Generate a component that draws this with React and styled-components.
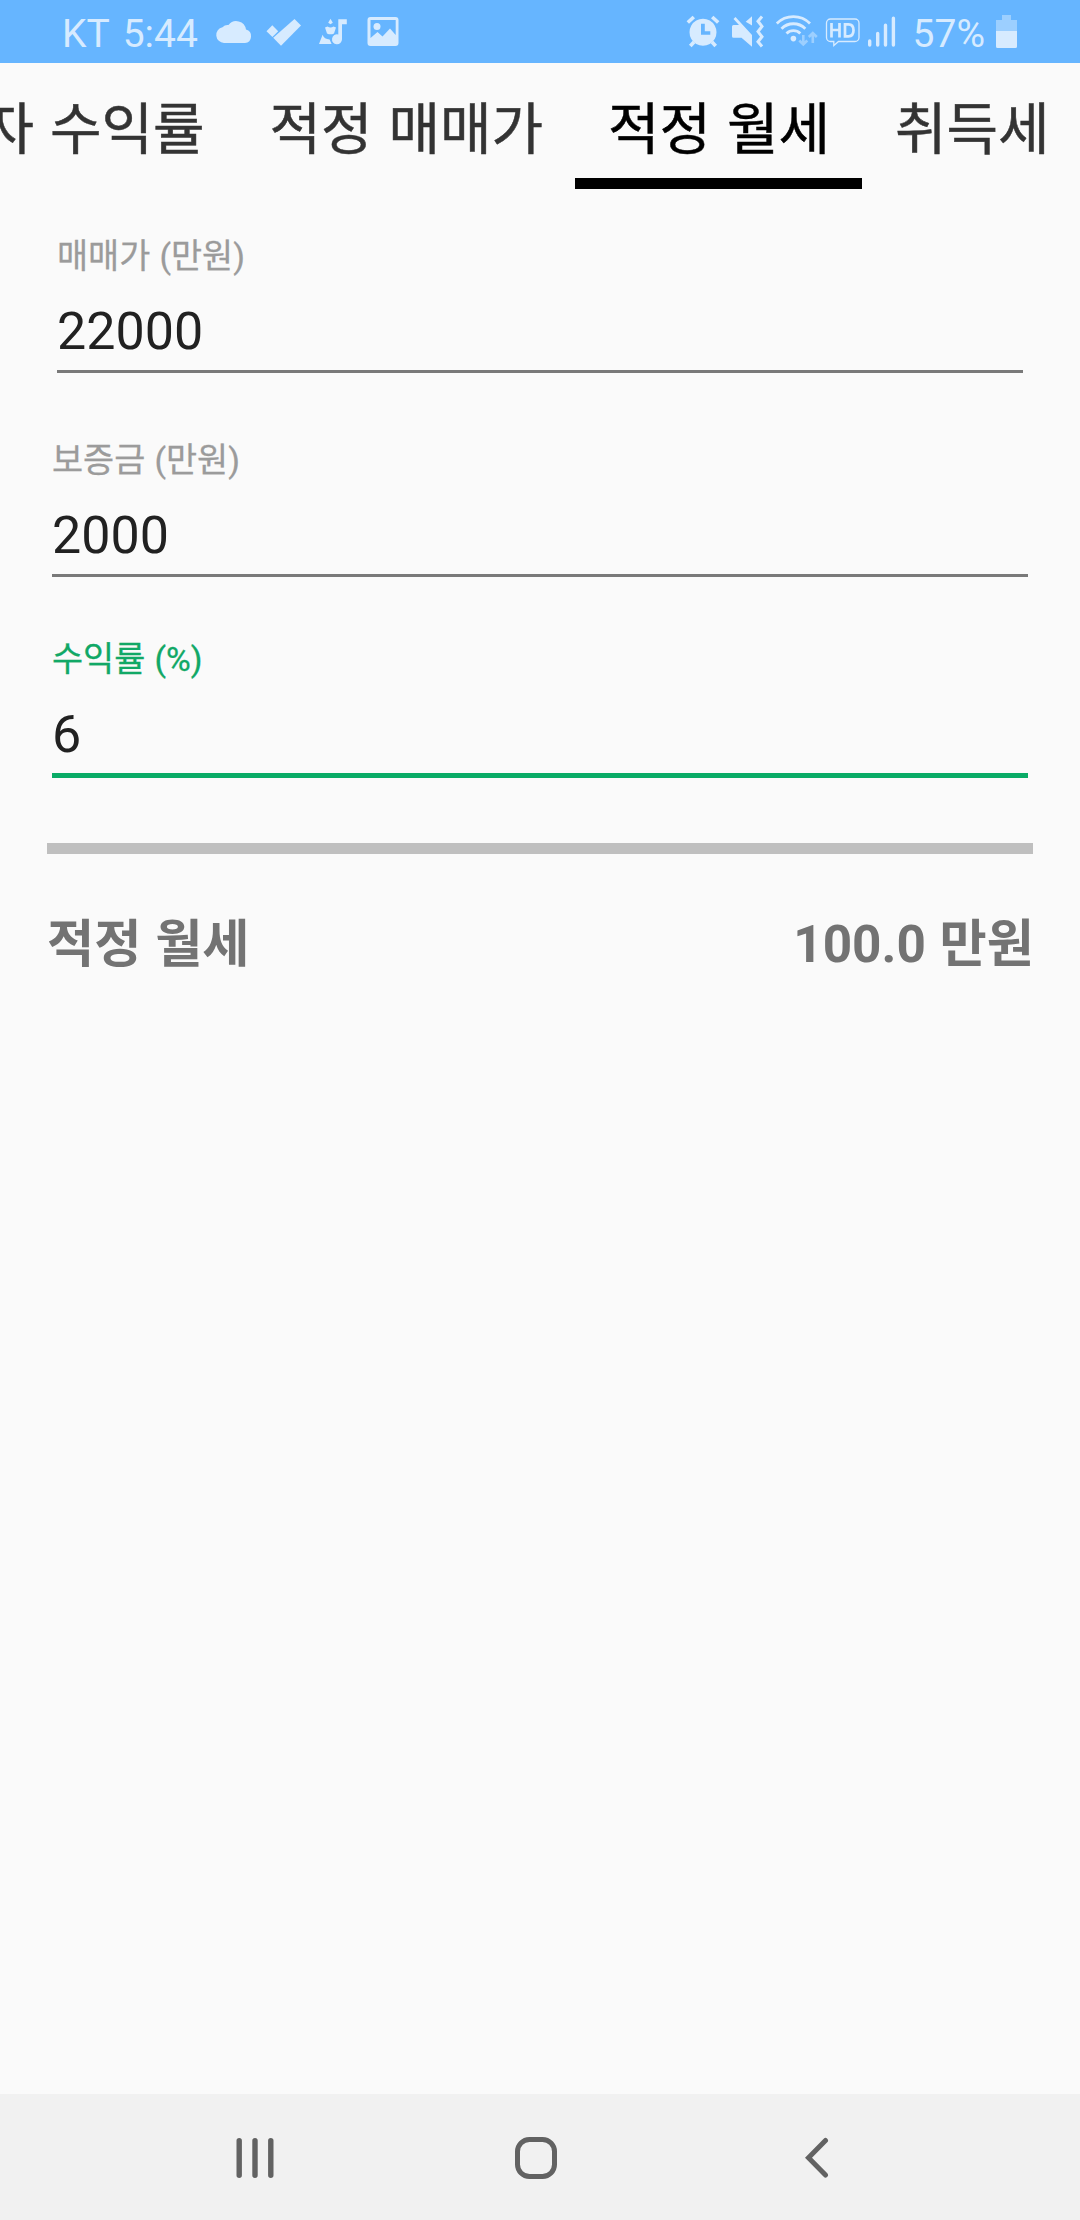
import React from 'react';
import styled, { createGlobalStyle } from 'styled-components';

const tabs = [
  { label: '투자 수익률' },
  { label: '적정 매매가' },
  { label: '적정 월세', active: true },
  { label: '취득세' },
];

const App = () => {
  return (
    <Screen>
      <GlobalStyle />
      <StatusBar>
        <StatusGroup>
          <Carrier>KT 5:44</Carrier>
          <CloudIcon />
          <CheckIcon />
          <MusicIcon />
          <PictureIcon />
        </StatusGroup>
        <StatusGroup>
          <AlarmIcon />
          <MuteIcon />
          <WifiIcon />
          <HdIcon />
          <SignalIcon />
          <StatusText>57%</StatusText>
          <BatteryIcon />
        </StatusGroup>
      </StatusBar>

      <TabBar>
        {tabs.map((tab) => (
          <Tab key={tab.label} $active={tab.active}>
            {tab.label}
          </Tab>
        ))}
      </TabBar>

      <Form>
        <Field $inset>
          <Label>매매가 (만원)</Label>
          <Value>22000</Value>
        </Field>
        <Field>
          <Label>보증금 (만원)</Label>
          <Value>2000</Value>
        </Field>
        <Field>
          <Label $focused>수익률 (%)</Label>
          <Value $focused>6</Value>
        </Field>
      </Form>

      <Result>
        <span>적정 월세</span>
        <span>100.0 만원</span>
      </Result>

      <NavBar>
        <NavButton>
          <svg width="40" height="42" viewBox="0 0 40 42">
            <path
              d="M4.2 3.6v34.6M20 3.6v34.6M35.8 3.6v34.6"
              stroke="#626262"
              strokeWidth="5.4"
              strokeLinecap="round"
            />
          </svg>
        </NavButton>
        <NavButton>
          <svg width="42" height="42" viewBox="0 0 42 42">
            <rect
              x="2.5"
              y="2.5"
              width="37"
              height="37"
              rx="12"
              fill="none"
              stroke="#626262"
              strokeWidth="5"
            />
          </svg>
        </NavButton>
        <NavButton>
          <svg width="24" height="42" viewBox="0 0 24 42">
            <path
              d="M20.5 3.5L3.5 20.7L20.5 38"
              fill="none"
              stroke="#626262"
              strokeWidth="5"
              strokeLinecap="round"
            />
          </svg>
        </NavButton>
      </NavBar>
    </Screen>
  );
};

const CloudIcon = () => (
  <StatusIcon viewBox="206 0 54 63" $width={54}>
    <path d="M224 43a8 8 0 0 1-1.500-15.800a7 7 0 0 1 6-2.200a9.800 9.800 0 0 1 17.500 4.500a6.900 6.900 0 0 1-1 13.500z" />
  </StatusIcon>
);

const CheckIcon = () => (
  <StatusIcon viewBox="260 0 50 63" $width={50}>
    <path d="M266.500 31.300L272.300 25.300L278.200 31.200L272.400 37z" />
    <path d="M273.200 37.800L294.500 19L301 25.500L281 45.800z" />
  </StatusIcon>
);

const MusicIcon = () => (
  <StatusIcon viewBox="310 0 47 63" $width={47}>
    <path d="M338.300 19.300h8.500v5h-4.800v15a5 5 0 1 1-3.700-4.800z" />
    <path d="M330.500 18.800l2.300 4l-2.300 1.400l-2.300-1.400z" />
    <path d="M325 27.500l2.500-1q3 2 6 0l2.500 1l-2 6q-3.500 1.700-7 0z" />
    <path d="M322.600 34.700q1.500 4.300 7 4.900l2 4.400h-12.600z" />
  </StatusIcon>
);

const PictureIcon = () => (
  <StatusIcon viewBox="357 0 52 63" $width={52}>
    <path
      fillRule="evenodd"
      d="M370.500 17h25a3 3 0 0 1 3 3v23a3 3 0 0 1-3 3h-25a3 3 0 0 1-3-3v-23a3 3 0 0 1 3-3zM370.500 20v18l7-6l5 4.500l7.500-8l5.700 6.500v-15z"
    />
    <circle cx="377" cy="26.500" r="3.500" />
  </StatusIcon>
);

const AlarmIcon = () => (
  <StatusIcon viewBox="680 0 45 63" $width={45}>
    <path
      fillRule="evenodd"
      d="M702 18.700a13.500 13.500 0 1 0 .01 0zM700 23.800h3.800v7.400h5.500v3.600h-9.300z"
    />
    <path
      d="M686.800 22.500l6-5.500M717.200 22.500l-6-5.500"
      fill="none"
      stroke="#d7ebff"
      strokeWidth="3.600"
    />
    <path
      d="M693 42l-3.700 4M711 42l3.700 4"
      fill="none"
      stroke="#d7ebff"
      strokeWidth="3.600"
    />
  </StatusIcon>
);

const MuteIcon = () => (
  <StatusIcon viewBox="725 0 44 63" $width={44}>
    <path d="M732.500 25h5.500l-5.500-6l2-2L751 35v11.700l-10.500-9h-8a1.500 1.500 0 0 1-1.500-1.500V26.500a1.500 1.500 0 0 1 1.500-1.500z" />
    <path d="M751 16.300v9.200l-6.300-3.800z" />
    <path
      d="M761 16.500l-4 4.700l4 5.200l-4 5.200l4 5.200l-4 5l4 4.700"
      fill="none"
      stroke="#d7ebff"
      strokeWidth="3"
    />
  </StatusIcon>
);

const WifiIcon = () => (
  <StatusIcon viewBox="769 0 51 63" $width={51}>
    <path
      d="M775.800 23.500a23.500 23.500 0 0 1 33.200 0M780.500 28.800a16.600 16.600 0 0 1 23.800 0M785.500 33.600a9.700 9.700 0 0 1 13.800 0"
      fill="none"
      stroke="#d7ebff"
      strokeWidth="2.800"
    />
    <circle cx="792.400" cy="38.600" r="2.800" />
    <path
      d="M802.300 35v9M798.300 40.500l4 4l4-4M811.800 43v-9M807.800 37l4-4l4 4"
      fill="none"
      stroke="#9ccfff"
      strokeWidth="2.600"
    />
  </StatusIcon>
);

const HdIcon = () => (
  <StatusIcon viewBox="820 0 44 63" $width={44}>
    <path
      d="M829.500 19h24.500a4 4 0 0 1 4 4v14.500a4 4 0 0 1-4 4h-16.500l-4.700 4v-4h-3.300a4 4 0 0 1-4-4v-14.500a4 4 0 0 1 4-4z"
      fill="none"
      stroke="#d7ebff"
      strokeWidth="1.300"
    />
    <path
      d="M830.500 23v14.500M838.500 23v14.500M830.500 30h8M844 24.300v12h3.500q5 0 5-6t-5-6z"
      fill="none"
      stroke="#d7ebff"
      strokeWidth="2.700"
    />
  </StatusIcon>
);

const SignalIcon = () => (
  <StatusIcon viewBox="864 0 48 63" $width={48}>
    <path
      d="M868.700 41v4M876.700 33.500v11.500M884.500 25.300v19.700M892.400 18.200v26.800"
      fill="none"
      stroke="#d7ebff"
      strokeWidth="3.400"
      strokeLinecap="round"
    />
  </StatusIcon>
);

const BatteryIcon = () => (
  <StatusIcon viewBox="984 0 35 63" $width={35}>
    <path d="M1001 15h9v5h6v12h-21v-12h6z" fill="#9ccfff" />
    <path d="M995 31h21v15.500a1.500 1.500 0 0 1-1.500 1.500h-18a1.500 1.500 0 0 1-1.500-1.500z" />
  </StatusIcon>
);

const GlobalStyle = createGlobalStyle`
  * {
    box-sizing: border-box;
  }

  body {
    margin: 0;
    background-color: #fafafa;
    font-family: Roboto, 'Noto Sans CJK KR', sans-serif;
  }
`;

const Screen = styled.div`
  display: flex;
  flex-direction: column;
  width: 1080px;
  height: 2220px;
  overflow: hidden;
  background-color: #fafafa;
`;

const StatusBar = styled.div`
  display: flex;
  justify-content: space-between;
  flex-shrink: 0;
  height: 63px;
  padding: 0 60px 0 62px;
  background-color: #66b5ff;
`;

const StatusGroup = styled.div`
  display: flex;
  align-items: center;
`;

const StatusText = styled.span`
  color: #d7ebff;
  font-size: 39px;
  line-height: 63px;
  padding-top: 5px;
  white-space: nowrap;
`;

const Carrier = styled(StatusText)`
  width: 144px;
  word-spacing: 4px;
`;

const StatusIcon = styled.svg`
  display: block;
  flex-shrink: 0;
  width: ${(props) => props.$width}px;
  height: 63px;
  fill: #d7ebff;
`;

/* scrolled to the right, so the first tab is cut off */
const TabBar = styled.div`
  display: flex;
  flex-shrink: 0;
  height: 126px;
  margin-left: -102px;
`;

const Tab = styled.div`
  flex-shrink: 0;
  padding: 0 32px 0 33px;
  color: ${(props) => (props.$active ? '#000' : '#333')};
  font-size: 56px;
  line-height: 134px;
  word-spacing: 2px;
  white-space: nowrap;
  border-bottom: 11px solid ${(props) => (props.$active ? '#000' : 'transparent')};
  -webkit-text-stroke: 0.5px;
`;

const Form = styled.div`
  display: flex;
  flex-direction: column;
  gap: 67px;
  flex-shrink: 0;
  height: 665px;
  margin: 0 47px;
  padding-top: 47px;
  border-bottom: 11px solid #bfbfbf;
`;

const Field = styled.div`
  margin: 0 ${(props) => (props.$inset ? '10px' : '5px')};

  &:last-child {
    margin-top: -5px;
  }
`;

const Label = styled.div`
  color: ${(props) => (props.$focused ? '#11a866' : '#9b9b9b')};
  font-size: 33.800px;
  line-height: 41px;
  word-spacing: 0.800px;
  -webkit-text-stroke: 0.3px;
`;

const Value = styled.div`
  margin-top: 25px;
  padding-bottom: 8px;
  color: #212121;
  font-size: 52px;
  line-height: 60px;
  border-bottom: ${(props) =>
    props.$focused ? '5px solid #09ab66' : '3px solid #797979'};
`;

const Result = styled.div`
  display: flex;
  justify-content: space-between;
  flex: 1;
  margin: 51px 46px 0 47px;
  color: #737373;
  font-size: 51.300px;
  font-weight: 700;
  line-height: 80px;
  word-spacing: 1px;
`;

const NavBar = styled.div`
  display: flex;
  justify-content: center;
  flex-shrink: 0;
  height: 126px;
  padding-right: 9px;
  background-color: #f1f1f1;
`;

const NavButton = styled.div`
  display: flex;
  align-items: center;
  justify-content: center;
  width: 281px;
  padding-top: 2px;
`;

export default App;
